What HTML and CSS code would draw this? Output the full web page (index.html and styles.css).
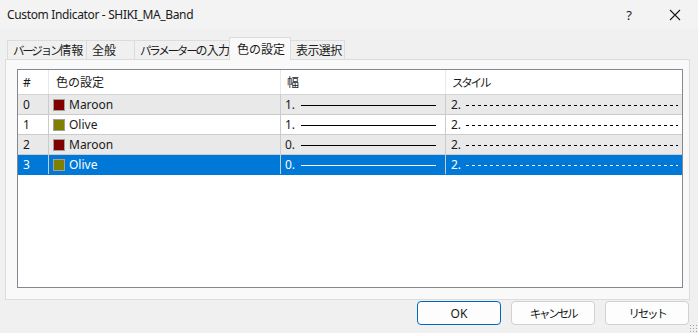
FILE: index.html
```html
<!DOCTYPE html>
<html lang="ja">
<head>
    <meta charset="UTF-8">
    <title>Custom Indicator - SHIKI_MA_Band</title>
    <link rel="stylesheet" href="styles.css">
</head>
<body>
    <div class="window">
        <div class="titlebar">
            <span class="title">Custom Indicator - SHIKI_MA_Band</span>
            <span class="tb-btn help">?</span>
            <span class="tb-btn close">
                <svg width="12" height="12" viewBox="0 0 12 12"><path d="M1 1 L11 11 M11 1 L1 11" stroke="#1a1a1a" stroke-width="1.1" fill="none"/></svg>
            </span>
        </div>

        <div class="tabs">
            <div class="tab tab-version"><span class="kana">バージョン</span>情報</div>
            <div class="tab tab-general">全般</div>
            <div class="tab tab-params"><span class="kana">パラメーター</span>の入力</div>
            <div class="tab tab-colors active">色の設定</div>
            <div class="tab tab-visual">表示選択</div>
        </div>

        <div class="panel">
            <div class="list">
                <div class="row head">
                    <div class="cell c-num">#</div>
                    <div class="cell c-color">色の設定</div>
                    <div class="cell c-width">幅</div>
                    <div class="cell c-style"><span class="kana">スタイル</span></div>
                </div>
                <div class="row alt">
                    <div class="cell c-num">0</div>
                    <div class="cell c-color"><span class="swatch maroon"></span>Maroon</div>
                    <div class="cell c-width">1.<span class="solid"></span></div>
                    <div class="cell c-style">2.<span class="dashed"></span></div>
                </div>
                <div class="row">
                    <div class="cell c-num">1</div>
                    <div class="cell c-color"><span class="swatch olive"></span>Olive</div>
                    <div class="cell c-width">1.<span class="solid"></span></div>
                    <div class="cell c-style">2.<span class="dashed"></span></div>
                </div>
                <div class="row alt">
                    <div class="cell c-num">2</div>
                    <div class="cell c-color"><span class="swatch maroon"></span>Maroon</div>
                    <div class="cell c-width">0.<span class="solid"></span></div>
                    <div class="cell c-style">2.<span class="dashed"></span></div>
                </div>
                <div class="row selected">
                    <div class="cell c-num">3</div>
                    <div class="cell c-color"><span class="swatch olive"></span>Olive</div>
                    <div class="cell c-width">0.<span class="solid"></span></div>
                    <div class="cell c-style">2.<span class="dashed"></span></div>
                </div>
            </div>
        </div>

        <div class="buttons">
            <button class="btn default">OK</button>
            <button class="btn"><span class="kana">キャンセル</span></button>
            <button class="btn"><span class="kana">リセット</span></button>
        </div>

        <div class="grip"></div>
    </div>
</body>
</html>
```

FILE: styles.css
```css
body {
    margin: 0;
    padding: 0;
    background-color: #f0f0f0;
    font-family: 'Noto Sans', 'Noto Sans CJK JP', sans-serif;
    font-size: 12px;
    color: #1a1a1a;
}

.window {
    position: relative;
    width: 698px;
    height: 333px;
    background-color: #f0f0f0;
    overflow: hidden;
}

/* カタカナは幅を詰める */
.kana {
    font-size: 11.5px;
    letter-spacing: -2.2px;
}

.titlebar {
    display: flex;
    align-items: center;
    height: 29px;
    background-color: #f3f3f3;
}

.title {
    flex: 1;
    padding-left: 7px;
    font-size: 12px;
    letter-spacing: -0.35px;
}

.tb-btn {
    display: flex;
    justify-content: center;
    align-items: center;
    width: 46px;
    height: 29px;
}

.help {
    font-size: 13px;
}

/* タブ */
.tabs {
    display: flex;
    align-items: flex-end;
    height: 22px;
    margin-top: 8px;
    padding-left: 7px;
}

.tab {
    display: flex;
    align-items: center;
    height: 18px;
    padding-left: 5px;
    border: 1px solid #dcdcdc;
    border-bottom: none;
    border-right: none;
    background-color: #f0f0f0;
    white-space: nowrap;
    overflow: hidden;
    font-size: 12px;
}

.tab-version { width: 73px; }
.tab-general { width: 42px; }
.tab-params  { width: 90px; letter-spacing: -0.7px; }
.tab-colors  { width: 53px; }
.tab-visual  { width: 48px; border-right: 1px solid #dcdcdc; letter-spacing: -0.6px; }

.tab.active {
    height: 22px;
    margin-left: -1px;
    margin-right: -1px;
    padding-left: 7px;
    border-right: 1px solid #dcdcdc;
    background-color: #f9f9f9;
    position: relative;
    z-index: 1;
    margin-bottom: -1px;
}

.panel {
    width: 685px;
    height: 241px;
    margin-left: 5px;
    border: 1px solid #dcdcdc;
    background-color: #f9f9f9;
    padding: 9px 0 0 11px;
    box-sizing: border-box;
}

.list {
    width: 666px;
    height: 219px;
    border: 1px solid #828790;
    background-color: #fff;
    box-sizing: border-box;
}

.row {
    display: grid;
    grid-template-columns: 30px 232px 165px 236px;
    height: 20px;
    box-sizing: border-box;
    border-bottom: 1px solid #cbcbcb;
}

.row.head {
    height: 25px;
    border-bottom: 1px solid #d5d5d5;
}

.row.alt {
    background-color: #e9e9e9;
}

.row.selected {
    background-color: #0078d7;
    color: #fff;
    border-bottom-color: #0078d7;
}

.cell {
    display: flex;
    align-items: center;
    padding-left: 6px;
    white-space: nowrap;
    overflow: hidden;
}

.cell + .cell {
    border-left: 1px solid #cbcbcb;
}

.head .cell + .cell {
    border-left-color: #e8e8e8;
}

.head .c-num { padding-left: 7px; }
.head .c-color { padding-left: 7px; }
.head .c-width { padding-left: 6px; }
.head .c-style { padding-left: 6px; }

.row .c-num { padding-left: 5px; }
.c-color { padding-left: 4px; }
.c-width { padding-left: 4px; }
.c-style { padding-left: 5px; }

.swatch {
    width: 10px;
    height: 10px;
    border: 1px solid #a0a0a0;
    margin-right: 4px;
    flex-shrink: 0;
}

.swatch.maroon { background-color: #800000; }
.swatch.olive  { background-color: #808000; }

.solid {
    width: 135px;
    height: 1px;
    margin-left: 6px;
    margin-top: 1px;
    background-color: #000;
}

.dashed {
    width: 212px;
    height: 1px;
    margin-left: 5px;
    margin-top: 1px;
    background-image: repeating-linear-gradient(to right, #000 0 3px, transparent 3px 6px);
}

.selected .solid { background-color: #fff; }
.selected .dashed {
    background-image: repeating-linear-gradient(to right, #fff 0 3px, transparent 3px 6px);
}

/* ボタン */
.buttons {
    display: flex;
    justify-content: flex-end;
    gap: 10px;
    margin-top: 1px;
    padding-right: 9px;
}

.btn {
    width: 84px;
    height: 24px;
    padding: 0;
    border: 1px solid #d0d0d0;
    border-radius: 4px;
    background-color: #fdfdfd;
    font-family: 'Noto Sans', 'Noto Sans CJK JP', sans-serif;
    font-size: 12px;
    color: #1a1a1a;
}

.btn.default {
    border-color: #0067c0;
}

.grip {
    position: absolute;
    right: 1px;
    bottom: 1px;
    width: 8px;
    height: 8px;
    background-image: radial-gradient(circle, #a0a0a0 0.8px, transparent 1px);
    background-size: 3px 3px;
}
```
